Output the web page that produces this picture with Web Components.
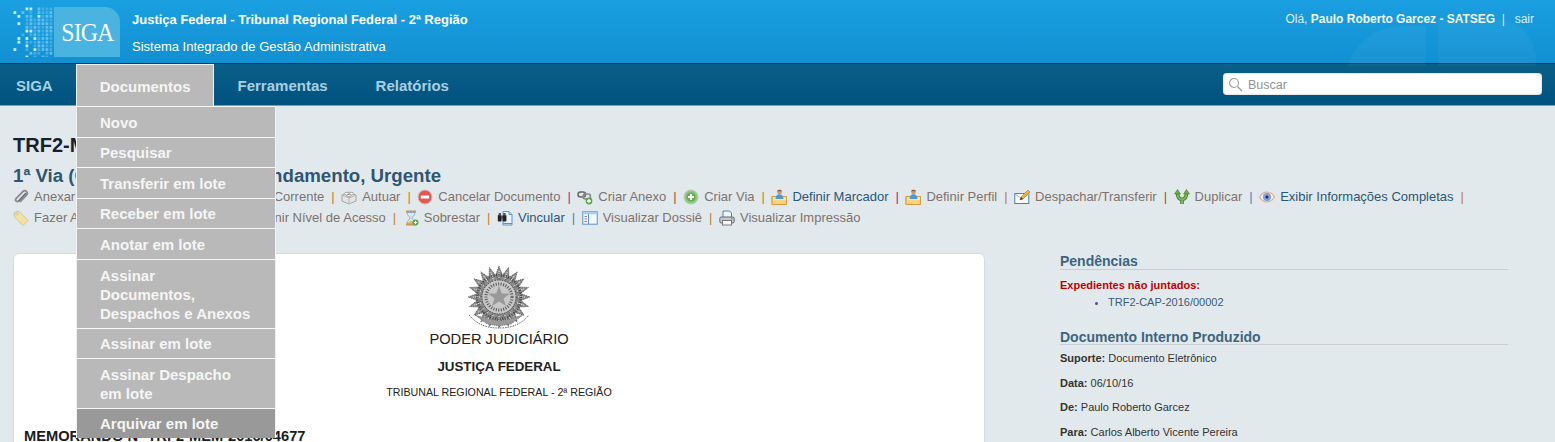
<!DOCTYPE html>
<html lang="pt-BR">
<head>
<meta charset="utf-8">
<title>SIGA</title>
<style>
html,body{margin:0;padding:0;height:442px;overflow:hidden;background:#e2e9ed;font-family:"Liberation Sans",Arial,sans-serif;}
</style>
</head>
<body>
<siga-header></siga-header>
<siga-nav></siga-nav>
<siga-page>
  <siga-title slot="title" heading="TRF2-MEM-2016/04677" sub="1ª Via (Ofício), Aguardando Andamento, Urgente"></siga-title>
  <siga-actions slot="actions">
    <siga-action icon="clip" sep="#b5813f" style="margin-right:-2px">Anexar Arquivo Auxiliar</siga-action>
    <siga-action icon="brick" sep="#c47f2c">Arquivar no Corrente</siga-action>
    <siga-action icon="brick" sep="#c47f2c">Autuar</siga-action>
    <siga-action icon="cancel" sep="#8e3a8e">Cancelar Documento</siga-action>
    <siga-action icon="chain" sep="#a5532f">Criar Anexo</siga-action>
    <siga-action icon="plus" sep="#c47f2c">Criar Via</siga-action>
    <siga-action icon="folder" sep="#7a3a8e" active>Definir Marcador</siga-action>
    <siga-action icon="folder" sep="#c47f2c">Definir Perfil</siga-action>
    <siga-action icon="mail" sep="#a5532f">Despachar/Transferir</siga-action>
    <siga-action icon="dup" sep="#3f86c4">Duplicar</siga-action>
    <siga-action icon="eye" sep="#c47f2c" active>Exibir Informações Completas</siga-action>
    <siga-action icon="tag" sep="#c47f2c">Fazer Anotação</siga-action>
    <siga-action icon="brick" sep="#c47f2c">Juntar</siga-action>
    <siga-action icon="brick" sep="#c47f2c">Redefinir Nível de Acesso</siga-action>
    <siga-action icon="hourglass" sep="#c47f2c">Sobrestar</siga-action>
    <siga-action icon="binoc" sep="#3f86c4" active>Vincular</siga-action>
    <siga-action icon="dossie" sep="#c47f2c">Visualizar Dossiê</siga-action>
    <siga-action icon="printer">Visualizar Impressão</siga-action>
  </siga-actions>
  <siga-doc slot="doc"></siga-doc>
  <siga-side slot="side"></siga-side>
</siga-page>

<script>
'use strict';

const ICONS = {
  clip: '<path d="M13 4 5.500 12a1.700 1.700 0 0 1-2.500-2.300L10 2.300a2.600 2.600 0 0 1 3.700 3.600L7 13" fill="none" stroke="#8a8a8a" stroke-width="1.800"/><path d="M13 4 5.500 12" fill="none" stroke="#555" stroke-width=".7"/>',
  brick: '<path d="M8 3 15 6v6l-7 3-7-3V6z" fill="#e4e4e4" stroke="#a4a4a4"/><path d="M1 6l7 3 7-3M8 9v6" fill="none" stroke="#b4b4b4"/><ellipse cx="5.500" cy="4.600" rx="2" ry="1.300" fill="#f4f4f4" stroke="#a4a4a4"/><ellipse cx="10.500" cy="4.600" rx="2" ry="1.300" fill="#f4f4f4" stroke="#a4a4a4"/><ellipse cx="8" cy="6.600" rx="2" ry="1.200" fill="#f4f4f4" stroke="#a4a4a4"/>',
  cancel: '<circle cx="8" cy="8" r="7" fill="#e4584f" stroke="#d8bcb6"/><rect x="3.800" y="6.500" width="8.400" height="3" fill="#fff"/>',
  chain: '<rect x="1" y="3" width="7.500" height="5" rx="2.500" fill="none" stroke="#666" stroke-width="1.500"/><rect x="6" y="5" width="7.500" height="5" rx="2.500" fill="none" stroke="#888" stroke-width="1.500"/><circle cx="12" cy="12" r="3.400" fill="#55a845"/><path d="M12 10v4M10 12h4" stroke="#fff" stroke-width="1.300"/>',
  plus: '<circle cx="8" cy="8" r="7" fill="#8fc97d" stroke="#b5cdb0"/><circle cx="8" cy="8" r="4.600" fill="#62ad54"/><path d="M8 5v6M5 8h6" stroke="#fff" stroke-width="2"/>',
  folder: '<path d="M1 7.500h14.500v8H1z" fill="#fbe7a4" stroke="#dd9a3c"/><path d="M1 11h14.500v4.500H1z" fill="#f7d57f"/><path d="M1 7.500h14.500v8H1z" fill="none" stroke="#dd9a3c"/><circle cx="8.500" cy="3" r="2.400" fill="#d59a6c"/><path d="M6 2.200c.6-1.700 4.400-1.700 5 0z" fill="#8a5a34"/><path d="M4.500 10c0-3 1.600-4.800 4-4.800s4 1.800 4 4.800z" fill="#4d9ad2"/>',
  mail: '<rect x=".8" y="4.500" width="14" height="10" fill="#fdfdfd" stroke="#4a80bd"/><path d="M1 5l7 5 7-5" fill="none" stroke="#9fb9d6"/><path d="m6 11 1-3 7-7 2 2-7 7z" fill="#f0b13d" stroke="#b07a20" stroke-width=".6"/><path d="m6 11 1-3 2 2z" fill="#333"/>',
  dup: '<path d="M8 15V10M8 10.500C4 10 3.500 7 3.500 4M8 10.500C12 10 12.500 7 12.500 4" fill="none" stroke="#3f7f2e" stroke-width="3.600"/><path d="M8 15V10M8 10.500C4 10 3.500 7 3.500 4M8 10.500C12 10 12.500 7 12.500 4" fill="none" stroke="#7cbc55" stroke-width="1.800"/><path d="M.5 5 3.500 .5 6.500 5zM9.500 5 12.500 .5 15.500 5z" fill="#6fae3f" stroke="#3f7f2e" stroke-width=".6"/>',
  eye: '<path d="M.5 8C3 4 5.500 3 8 3s5 1 7.500 5c-2.500 4-5 5-7.500 5S3 12 .5 8z" fill="#fbf3ec" stroke="#dba98a" stroke-width="1.200"/><circle cx="8" cy="8" r="4.200" fill="#7ea2dd"/><circle cx="8" cy="8" r="1.500" fill="#1c2c50"/>',
  tag: '<path d="M1 3 5.500 1l9.500 9.500-5 5L1.500 7z" fill="#f6e39b" stroke="#c4c2b6"/><circle cx="4" cy="4" r="1.100" fill="#fff" stroke="#a8a490" stroke-width=".6"/>',
  hourglass: '<path d="M3 1.500h10M3 14.500h10" stroke="#c89a50" stroke-width="2"/><path d="M4 2.500h8c0 3-3 4-3 5.500s3 2.500 3 5.500H4c0-3 3-4 3-5.500S4 5.500 4 2.500z" fill="#dbe9f5" stroke="#7d9cbd" stroke-width=".8"/><path d="M5 13.500c.5-2 2-2.500 3-3 1 .5 2.500 1 3 3z" fill="#e8b654"/><circle cx="12.500" cy="12.500" r="3" fill="#55a845"/><path d="M12.500 10.800v3.400M10.800 12.500h3.400" stroke="#fff"/>',
  binoc: '<path d="M6 1.500h6l3 3v10.500H6z" fill="#e9f2fb" stroke="#5c94cf"/><path d="M12 1.500v3h3" fill="#bcd6ee" stroke="#5c94cf"/><path d="M6 13.500h9" stroke="#5c94cf"/><rect x=".8" y="5" width="3.800" height="6.500" rx=".8" fill="#222"/><rect x="5.600" y="5" width="3.800" height="6.500" rx=".8" fill="#222"/><rect x="4" y="6" width="2" height="3" fill="#555"/><rect x="1.600" y="3" width="2.400" height="2.500" fill="#555"/><rect x="6.200" y="3" width="2.400" height="2.500" fill="#555"/>',
  dossie: '<rect x=".8" y="1.800" width="14.400" height="12.400" fill="#f4f8fc" stroke="#5c94cf"/><path d="M1 2h14v2.300H1z" fill="#a8cdef"/><path d="M6.500 4v10" stroke="#5c94cf"/><path d="M2.500 6.500h2.500M2.500 9h2.500M2.500 11.500h2.500" stroke="#888"/>',
  printer: '<path d="M4 1h6.500L12.500 3v5H4z" fill="#eef5fb" stroke="#5a7ea8"/><rect x=".8" y="7" width="14.400" height="6" rx="1.500" fill="#c6c8cb" stroke="#666"/><rect x="3.500" y="10.500" width="9" height="4.500" fill="#fff" stroke="#777"/><rect x="12" y="8.300" width="1.500" height="1" fill="#4a9a3a"/>'
};

const LOGO_DOTS = [
  '...cc.baaa',
  'c.b.a.baab',
  '.c.bb.cabb',
  '...ababbaa',
  '.c.ababbba',
  '...babaabb',
  '...ccababb',
  '..a.abaaba',
  '.c.c.cabba',
  '.c.baababa',
  '...c.abbaa',
  'c..a.cabba',
  '....baa.ab',
  '...c.a.ba.'
];
const DOT_FILL = { a: '#45ade2', b: '#66bdea', c: '#c8ebfa' };

const headerTemplate = document.createElement('template');
headerTemplate.innerHTML = `
<style>
:host{display:flex;align-items:stretch;height:63px;box-sizing:content-box;border-bottom:1px solid #0c3a52;
  background:linear-gradient(#1a9fe0,#1190d2);color:#fff;font:13px "Liberation Sans",Arial,sans-serif;position:relative;overflow:hidden}
.logo{margin:7px 0 0 13px;display:flex;height:50px}
.card{width:66px;height:50px;background:#4bb3df;border-top-right-radius:15px;display:flex;align-items:center;justify-content:center;color:#f4fbfe}
.card span{display:inline-block;font:26px/26px "Liberation Serif",serif;letter-spacing:-1px;transform:scaleX(.92);margin-top:1px}
.titles{margin-left:12px;display:flex;flex-direction:column;padding-top:12px;gap:12px}
.titles div{line-height:15px}
.titles b{text-rendering:geometricPrecision}
.user{margin-left:auto;padding:12px 21px 0 0;font-size:12px;line-height:15px;color:#dcecf5;z-index:1}
.user b{color:#f2f8fb}
.user i{font-style:normal;margin:0 6.500px}
</style>
<div class="logo"><svg id="dots" width="41" height="50" viewBox="0 0 41 50"></svg><div class="card"><span>SIGA</span></div></div>
<div class="titles"><div><b>Justiça Federal - Tribunal Regional Federal - 2ª Região</b></div><div>Sistema Integrado de Gestão Administrativa</div></div>
<div class="user">Olá, <b>Paulo Roberto Garcez - SATSEG</b><i>|</i> sair</div>
`;

customElements.define('siga-header', class SigaHeader extends HTMLElement {
  constructor() {
    super();
    this._shadowRoot = this.attachShadow({ mode: 'open' });
    this._shadowRoot.appendChild(headerTemplate.content.cloneNode(true));
    let out = '';
    LOGO_DOTS.forEach((row, y) => {
      [...row].forEach((ch, x) => {
        if (ch === '.') return;
        out += `<rect x="${x * 4 + .5}" y="${y * 3.700 + .5}" width="2.800" height="2.800" fill="${DOT_FILL[ch]}"/>`;
      });
    });
    this._shadowRoot.querySelector('#dots').innerHTML = out;
  }
});

const navTemplate = document.createElement('template');
navTemplate.innerHTML = `
<style>
:host{display:flex;align-items:stretch;height:41px;background:linear-gradient(#0a5f88,#00527f);border-bottom:1px solid #8c9aa3;
  font:bold 15px "Liberation Sans",Arial,sans-serif;position:relative;z-index:5}
.item{padding:0 24px;line-height:43px;color:#a8cfe2}
.first{padding:0 23px 0 16px}
.open{position:relative;background:#b9b9b9;color:#f5f5f5;padding:0 22px 0 23px;border:1px solid #f2f2f2;border-bottom:0;height:41px}
.search{margin:9px 13px 0 auto;width:319px;height:22px;background:#fff;border-radius:4px;display:flex;align-items:center;gap:5px;padding:1px 0 0 5px;box-sizing:border-box;
  font:normal 12.500px "Liberation Sans",Arial,sans-serif;color:#8d949b;box-shadow:inset 0 0 2px #aaa}
.search svg{flex:none;margin-top:-1px}
.mark{position:absolute;left:1340px;top:-50px;pointer-events:none}
siga-menu{position:absolute;left:76px;top:42px}
</style>
<svg class="mark" width="200" height="92" viewBox="0 0 200 92"><g fill="#fff" fill-opacity=".04"><path d="M8 52C14 30 36 12 64 12h22v40z"/><path d="M98 6h58a40 40 0 0 1 40 46H98z"/></g></svg>
<div class="item first">SIGA</div>
<div class="item open">Documentos</div>
<div class="item">Ferramentas</div>
<div class="item">Relatórios</div>
<div class="search"><svg width="15" height="15" viewBox="0 0 15 15"><circle cx="6" cy="6" r="4.500" fill="none" stroke="#999" stroke-width="1.100"/><path d="m9.500 9.500 4.500 4.500" stroke="#999" stroke-width="1.200"/></svg>Buscar</div>
<siga-menu>
  <siga-menu-item>Novo</siga-menu-item>
  <siga-menu-item>Pesquisar</siga-menu-item>
  <siga-menu-item>Transferir em lote</siga-menu-item>
  <siga-menu-item>Receber em lote</siga-menu-item>
  <siga-menu-item>Anotar em lote</siga-menu-item>
  <siga-menu-item>Assinar<br>Documentos,<br>Despachos e Anexos</siga-menu-item>
  <siga-menu-item>Assinar em lote</siga-menu-item>
  <siga-menu-item>Assinar Despacho<br>em lote</siga-menu-item>
  <siga-menu-item hover>Arquivar em lote</siga-menu-item>
</siga-menu>
`;

customElements.define('siga-nav', class SigaNav extends HTMLElement {
  constructor() {
    super();
    this._shadowRoot = this.attachShadow({ mode: 'open' });
    this._shadowRoot.appendChild(navTemplate.content.cloneNode(true));
  }
});

customElements.define('siga-menu', class SigaMenu extends HTMLElement {
  constructor() {
    super();
    this.attachShadow({ mode: 'open' }).innerHTML = `
<style>:host{display:block;width:200px;box-sizing:border-box;border-left:1px solid #f2f2f2;border-right:1px solid #f2f2f2}</style><slot></slot>`;
  }
});

customElements.define('siga-menu-item', class SigaMenuItem extends HTMLElement {
  constructor() {
    super();
    this.attachShadow({ mode: 'open' }).innerHTML = `
<style>
:host{display:block;background:#b9b9b9;border-top:1px solid #f7f7f7;padding:5.600px 10px 5px 23px;
  font:bold 15px/19px "Liberation Sans",Arial,sans-serif;color:#f5f5f5}
:host([hover]){background:#999}
</style><slot></slot>`;
  }
});

customElements.define('siga-page', class SigaPage extends HTMLElement {
  constructor() {
    super();
    this.attachShadow({ mode: 'open' }).innerHTML = `
<style>
:host{display:block;padding:26px 0 0 13px}
.cols{display:flex;margin-top:25px;align-items:flex-start}
.cols ::slotted([slot=doc]){flex:none;width:972px}
.cols ::slotted([slot=side]){flex:none;width:448px;margin-left:75px}
</style>
<slot name="title"></slot><slot name="actions"></slot>
<div class="cols"><slot name="doc"></slot><slot name="side"></slot></div>`;
  }
});

customElements.define('siga-title', class SigaTitle extends HTMLElement {
  constructor() {
    super();
    this.attachShadow({ mode: 'open' }).innerHTML = `
<style>
:host{display:block;font-family:"Liberation Sans",Arial,sans-serif}
h2{margin:0;font-size:20px;line-height:26px;color:#16212c}
h3{margin:7px 0 0 0;font-size:18.670px;line-height:22px;font-weight:bold;color:#2f5672}
</style>
<h2>${this.getAttribute('heading')}</h2><h3>${this.getAttribute('sub')}</h3>`;
  }
});

customElements.define('siga-actions', class SigaActions extends HTMLElement {
  constructor() {
    super();
    this.attachShadow({ mode: 'open' }).innerHTML = `
<style>:host{display:flex;flex-wrap:wrap;margin-top:-1px;padding-right:80px}</style><slot></slot>`;
  }
});

customElements.define('siga-action', class SigaAction extends HTMLElement {
  constructor() {
    super();
    const icon = ICONS[this.getAttribute('icon')] || '';
    const sep = this.getAttribute('sep');
    this.attachShadow({ mode: 'open' }).innerHTML = `
<style>
:host{display:inline-flex;align-items:center;height:21px;font:13px "Liberation Sans",Arial,sans-serif;color:#7f726b;white-space:nowrap}
:host([active]){color:#2b5678}
svg{width:16px;height:16px;margin-right:5px;flex:none}
i{font-style:normal;margin:0 6.500px 0 7px;font-weight:normal}
</style>
${icon ? `<svg viewBox="0 0 16 16">${icon}</svg>` : ''}<slot></slot>${sep ? `<i style="color:${sep}">|</i>` : ''}`;
  }
});

customElements.define('siga-doc', class SigaDoc extends HTMLElement {
  constructor() {
    super();
    // brasao: dithered rays around a grey star
    let rays = '';
    for (let i = 0; i < 20; i++) {
      const a = i * 18;
      rays += `<path d="M0-31 6-15-6-15z" transform="rotate(${a})" fill="#8c8c8c" stroke="#222" stroke-width=".6" stroke-dasharray="1 1"/>`;
      rays += `<path d="M0-26V-17" transform="rotate(${a})" stroke="#fff" stroke-width=".9" stroke-dasharray="1 1"/>`;
    }
    this.attachShadow({ mode: 'open' }).innerHTML = `
<style>
:host{display:block;background:#fff;border:1px solid #d6dbde;border-radius:6px;box-sizing:border-box;height:240px;overflow:hidden;font-family:"Liberation Sans",Arial,sans-serif;color:#222;padding:10px 10px 0}
.head{text-align:center}
.head svg{display:block;margin:0 auto}
.a{font-size:14.670px;line-height:20px;margin-top:-1px}
.b{font-size:13.330px;font-weight:bold;line-height:16px;margin-top:10px}
.c{font-size:10.670px;line-height:14px;margin-top:10px}
.m{font-size:14.670px;font-weight:bold;line-height:16px;margin-top:29px;color:#1c1c1c}
</style>
<div class="head">
<svg width="66" height="66" viewBox="-33 -33 66 66">
  ${rays}
  <circle r="22" fill="none" stroke="#444" stroke-width="2.500" stroke-dasharray="1 1.500"/>
  <circle r="17" fill="#c8c8c8" stroke="#333" stroke-width=".8" stroke-dasharray="1.500 1"/>
  <circle r="13" fill="none" stroke="#555" stroke-width="3" stroke-dasharray="1 1.500"/>
  <path d="M0-11 2.800-3.500 11-3.500 4.500 1.500 7 9 0 4.500-7 9-4.500 1.500-11-3.500-2.800-3.500z" fill="#999"/>
  <path d="M-30 18C-20 30-8 31 0 31s20-1 30-13" fill="none" stroke="#666" stroke-width="1" stroke-dasharray="1.500 1"/>
  <path d="M-24 18-12 27 0 29 12 27 24 18 10 22 0 24-10 22z" fill="#999" stroke="#333" stroke-width=".5" stroke-dasharray="1 1"/>
</svg>
<div class="a">PODER JUDICIÁRIO</div>
<div class="b">JUSTIÇA FEDERAL</div>
<div class="c">TRIBUNAL REGIONAL FEDERAL - 2ª REGIÃO</div>
</div>
<div class="m">MEMORANDO Nº TRF2-MEM-2016/04677</div>`;
  }
});

customElements.define('siga-side', class SigaSide extends HTMLElement {
  constructor() {
    super();
    this.attachShadow({ mode: 'open' }).innerHTML = `
<style>
:host{display:block;font:11px "Liberation Sans",Arial,sans-serif;color:#333}
h4{margin:0;font-weight:bold;color:#3d6480;border-bottom:1px solid #c9ced2;font-size:14px}
.p{line-height:15px;padding-top:1px}
.d{line-height:14px;margin-top:20px;padding-top:1px}
.e{margin:8px 0 0;font-weight:bold;color:#c00000;line-height:14px}
ul{margin:3px 0 0;padding-left:48px;line-height:14px;color:#3a5a78}
p{margin:0;line-height:14px;padding-top:10.500px}
.f{padding-top:6px}
</style>
<h4 class="p">Pendências</h4>
<div class="e">Expedientes não juntados:</div>
<ul><li>TRF2-CAP-2016/00002</li></ul>
<h4 class="d">Documento Interno Produzido</h4>
<p class="f"><b>Suporte:</b> Documento Eletrônico</p>
<p><b>Data:</b> 06/10/16</p>
<p><b>De:</b> Paulo Roberto Garcez</p>
<p><b>Para:</b> Carlos Alberto Vicente Pereira</p>`;
  }
});
</script>
</body>
</html>
